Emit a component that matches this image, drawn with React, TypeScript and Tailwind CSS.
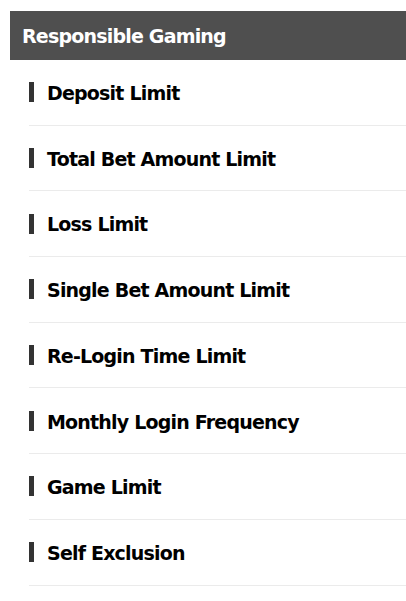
const items = [
  "Deposit Limit",
  "Total Bet Amount Limit",
  "Loss Limit",
  "Single Bet Amount Limit",
  "Re-Login Time Limit",
  "Monthly Login Frequency",
  "Game Limit",
  "Self Exclusion",
];

export default function App() {
  return (
    <div className="min-h-[601px] bg-white pt-[11px] pl-[10px] font-['DejaVu_Sans',sans-serif]">
      {/* Title bar */}
      <div className="h-[49px] bg-[#4f4f4f] pl-[12px] flex items-center">
        <h1 className="text-white font-bold text-[19px] tracking-[-0.8px] pt-px">Responsible Gaming</h1>
      </div>

      {/* Limits */}
      <ul className="ml-[19px]">
        {items.map((item) => (
          <li
            key={item}
            className="h-[65.7px] border-b border-[#ebebeb] flex items-center"
          >
            <span className="w-[5px] h-[20px] bg-[#333333] mr-[13px]" />
            <span className="text-black font-bold text-[19px] tracking-[-0.8px] pt-[2px]">{item}</span>
          </li>
        ))}
      </ul>
    </div>
  );
}
